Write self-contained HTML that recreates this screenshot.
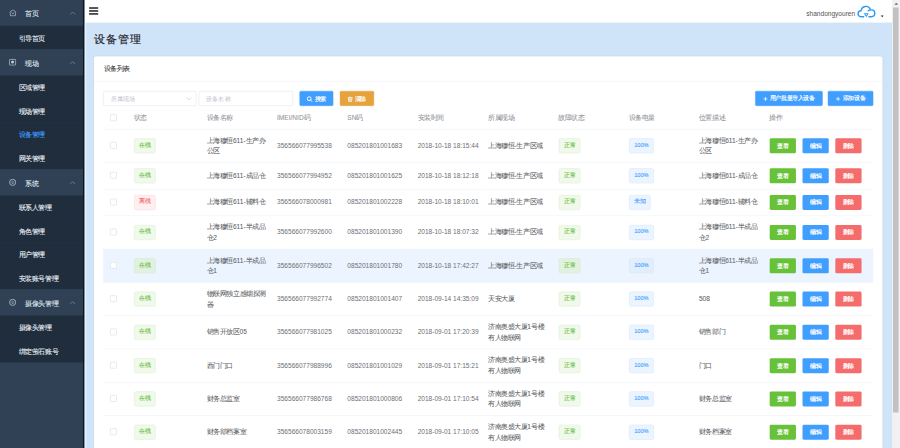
<!DOCTYPE html>
<html><head><meta charset="utf-8"><style>*{box-sizing:border-box;margin:0;padding:0}
html,body{width:900px;height:448px;overflow:hidden;background:#fff}
body{position:relative;font-family:"Liberation Sans",sans-serif}
#root{position:absolute;left:0;top:0;width:1920px;height:960px;transform:scale(0.46875);transform-origin:0 0;overflow:hidden;background:#cfe4f8}
.side{position:absolute;left:0;top:0;width:180px;height:960px;background:#304156}
.mi{position:absolute;left:0;width:180px;color:#dde3ea;font-size:14px}
.mh{height:56px;line-height:56px;background:#304156}
.ms{height:50px;line-height:50px;background:#1f2d3d;color:#e9eef3}
.mh span.t{position:absolute;left:54px;top:1.5px}
.ms span.t{position:absolute;left:40px;top:1.5px}
.ms.act{color:#409eff}
.mh svg.ic{position:absolute;left:20px;top:21px}
.mh svg.ar{position:absolute;left:148px;top:25px}
.nav{position:absolute;left:180px;top:0;width:1740px;height:50px;background:#fff;border-bottom:1.5px solid #e2e6ea}
.ham{position:absolute;left:10px;top:15px}
.user{position:absolute;left:1540px;top:23px;font-size:14px;color:#555;line-height:16px}
.cloud{position:absolute;left:1644px;top:8px}
.caret{position:absolute;left:1699px;top:34px;width:0;height:0;border-left:3px solid transparent;border-right:3px solid transparent;border-top:4px solid #222}
.main{position:absolute;left:180px;top:50px;width:1723px;height:910px;background:#cfe4f8}
.title{position:absolute;left:21.5px;top:17.5px;font-size:24.5px;line-height:34px;color:#1f2329;-webkit-text-stroke:0.35px #1f2329}
.card{position:absolute;left:20px;top:71px;width:1683px;height:900px;background:#fff;border:1px solid #eef2f6;border-radius:4px;box-shadow:0 0 0 1.6px #c4dcf1}
.card-h{position:absolute;left:0;top:0;width:100%;height:53px;border-bottom:1px solid #ebeef5;padding:18px 20px 0;font-size:14px;line-height:17px;color:#303133;-webkit-text-stroke:0.1px #303133}
.sel-box,.inp-box{position:absolute;top:73px;height:32px;border:1px solid #dcdfe6;border-radius:4px;background:#fff}
.sel-box{left:19px;width:199px}
.inp-box{left:223px;width:201px}
.ph{position:absolute;left:15px;top:7.5px;font-size:13.3px;line-height:16px;color:#c0c4cc}
.chev{position:absolute;left:175.5px;top:12px}
.fbtn{position:absolute;top:73px;height:32px;border-radius:3px;color:#fff;font-size:12px;line-height:12px}
.fbtn.b{background:#409eff;border:1px solid #409eff}
.fbtn.o{background:#e6a23c;border:1px solid #e6a23c}
.tbl{position:absolute;left:19px;top:106px;width:1643px;border-collapse:collapse;table-layout:fixed;font-size:14px;color:#606266}
.tbl td{border-bottom:1px solid #ebeef5;padding:0 10px;vertical-align:middle;line-height:23px;white-space:nowrap}
.tbl tr.th td{color:#909399;font-weight:normal}
.hovbg{position:absolute;left:19px;top:410px;width:1643px;height:71px;background:#ecf5ff}
.tbl td.sel{padding:0 0 0 15px}
.tbl td.ops{padding-left:11px}
.tbl td{-webkit-text-stroke:0.12px currentColor}
.fbtn span{-webkit-text-stroke:0.35px #fff}
.mi .t{-webkit-text-stroke:0.22px currentColor}
.tag{-webkit-text-stroke:0.22px currentColor;margin-left:1px}
.cb{display:inline-block;width:14px;height:14px;border:1.3px solid #cfd3da;border-radius:2px;background:#fff;vertical-align:middle;position:relative;top:-1px}
.tag{display:inline-block;height:32px;line-height:27px;padding:0 10px;font-size:12px;border-radius:4px;border:1px solid;vertical-align:middle}
.tag.ok{background:#f0f9eb;border-color:#d8efcb;color:#67c23a}
.tag.bad{background:#fef0f0;border-color:#fbd6d6;color:#f56c6c}
.tag.pri{background:#ecf5ff;border-color:#d0e6fd;color:#409eff}
.hov .tag.ok{background:#e2f0e0;border-color:#d2e9c8}
.hov .tag.pri{background:#e2eefb}
.btn{display:inline-block;-webkit-text-stroke:0.4px #fff;width:56px;height:32px;line-height:32px;text-align:center;font-size:12px;color:#fff;border-radius:3px;vertical-align:middle;margin-right:14px}
.btn.g{background:#67c23a}
.btn.b{background:#409eff}
.btn.r{background:#f56c6c}
.sb{position:absolute;left:1903px;top:0;width:17px;height:960px;background:#f1f1f1}
.sb-up{position:absolute;left:4.5px;top:6.5px;width:0;height:0;border-left:4px solid transparent;border-right:4px solid transparent;border-bottom:4.5px solid #666}
.sb-thumb{position:absolute;left:2px;top:17px;width:12px;height:864px;background:#c1c1c1}
#inner{position:absolute;left:0;top:-1px;width:1920px;height:962px}
.edge1{position:absolute;left:177px;top:0;width:2.5px;height:962px;background:#0d1723}
.edge2{position:absolute;left:180.5px;top:50px;width:3.5px;height:912px;background:#e3f3fd}
.tbl td.num{color:#6c6f75;-webkit-text-stroke:0}
</style></head>
<body><div id="root"><div id="inner">
<div class="side">
<div class="mi mh" style="top:0px"><svg class="ic" width="15" height="15" viewBox="0 0 15 15"><path d="M7.5 0.8 L14 5.8 L12.4 13.8 H2.6 L1 5.8 Z" fill="none" stroke="#bfcbd9" stroke-width="1.5" stroke-linejoin="miter"/><path d="M4.6 7.2 Q7.5 10.8 10.4 7.2" fill="none" stroke="#bfcbd9" stroke-width="1.5"/></svg><span class="t">首页</span><svg class="ar" width="14" height="8" viewBox="0 0 14 8"><path d="M1.5 7 L7 1.5 L12.5 7" fill="none" stroke="#8592a3" stroke-width="1.4"/></svg></div>
<div class="mi ms" style="top:56px"><span class="t">引导首页</span></div>
<div class="mi mh" style="top:106px"><svg class="ic" width="16" height="15" viewBox="0 0 16 15" style="left:19px;top:20px"><rect x="1" y="1.5" width="13.5" height="12.5" rx="2" fill="none" stroke="#bfcbd9" stroke-width="1.6"/><circle cx="7.75" cy="7.5" r="3.2" fill="#bfcbd9"/></svg><span class="t">现场</span><svg class="ar" width="14" height="8" viewBox="0 0 14 8"><path d="M1.5 7 L7 1.5 L12.5 7" fill="none" stroke="#8592a3" stroke-width="1.4"/></svg></div>
<div class="mi ms" style="top:162px"><span class="t">区域管理</span></div>
<div class="mi ms" style="top:212px"><span class="t">现场管理</span></div>
<div class="mi ms act" style="top:262px"><span class="t">设备管理</span></div>
<div class="mi ms" style="top:312px"><span class="t">网关管理</span></div>
<div class="mi mh" style="top:362px"><svg class="ic" width="16" height="16" viewBox="0 0 16 16" style="left:18.5px;top:20px"><circle cx="8" cy="8" r="6.6" fill="none" stroke="#bfcbd9" stroke-width="1.6"/><path d="M8 4.6 L11.4 8 L8 11.4 L4.6 8 Z" fill="none" stroke="#bfcbd9" stroke-width="1.1"/><circle cx="8" cy="8" r="0.9" fill="#bfcbd9"/></svg><span class="t">系统</span><svg class="ar" width="14" height="8" viewBox="0 0 14 8"><path d="M1.5 7 L7 1.5 L12.5 7" fill="none" stroke="#8592a3" stroke-width="1.4"/></svg></div>
<div class="mi ms" style="top:418px"><span class="t">联系人管理</span></div>
<div class="mi ms" style="top:468px"><span class="t">角色管理</span></div>
<div class="mi ms" style="top:518px"><span class="t">用户管理</span></div>
<div class="mi ms" style="top:568px"><span class="t">安装账号管理</span></div>
<div class="mi mh" style="top:618px"><svg class="ic" width="16" height="16" viewBox="0 0 16 16" style="left:18.5px;top:20px"><circle cx="8" cy="8" r="6.6" fill="none" stroke="#bfcbd9" stroke-width="1.6"/><path d="M8 4.6 L11.4 8 L8 11.4 L4.6 8 Z" fill="none" stroke="#bfcbd9" stroke-width="1.1"/><circle cx="8" cy="8" r="0.9" fill="#bfcbd9"/></svg><span class="t">摄像头管理</span><svg class="ar" width="14" height="8" viewBox="0 0 14 8"><path d="M1.5 7 L7 1.5 L12.5 7" fill="none" stroke="#8592a3" stroke-width="1.4"/></svg></div>
<div class="mi ms" style="top:674px"><span class="t">摄像头管理</span></div>
<div class="mi ms" style="top:724px"><span class="t">绑定萤石账号</span></div>
</div>
<div class="nav">
 <svg class="ham" viewBox="0 0 20 20" width="20" height="20"><rect x="0" y="1.5" width="20" height="3.2" fill="#222"/><rect x="0" y="7.8" width="20" height="3.2" fill="#222"/><rect x="0" y="14.1" width="20" height="3.2" fill="#222"/></svg>
 <span class="user">shandongyouren</span>
 <svg class="cloud" viewBox="0 0 24 16" width="51.2" height="34.13"><g fill="none" stroke="#2b9bef" stroke-width="1.4" stroke-linecap="round"><path d="M8.6 13.4 H6.0 A3 3 0 0 1 6.1 7.4 A4.9 4.9 0 0 1 15.3 5.8"/><path d="M13.2 7.4 Q14 6.6 16.4 6.6 A3.4 3.4 0 0 1 16.4 13.4 H13.9"/></g><path d="M8.7 9.9 H13.8 L11.25 13.9 Z" fill="#2b9bef"/><circle cx="11.25" cy="11.3" r="0.6" fill="#fff"/></svg>
 <span class="caret"></span>
</div>
<div class="main">
 <div class="title">设备管理</div>
 <div class="card">
  <div class="card-h">设备列表</div>
  <div class="sel-box"><span class="ph">所属现场</span><svg class="chev" viewBox="0 0 12 7" width="12" height="7"><path d="M1 1 L6 6 L11 1" fill="none" stroke="#c0c4cc" stroke-width="1.4"/></svg></div>
  <div class="inp-box"><span class="ph">设备名称</span></div>
  <div class="fbtn b" style="left:438px;width:72px"><svg viewBox="0 0 14 14" width="13" height="13" style="position:absolute;left:14px;top:10px"><circle cx="6" cy="6" r="4.4" fill="none" stroke="#fff" stroke-width="2.2"/><path d="M9.3 9.3 L12.6 12.6" stroke="#fff" stroke-width="2.2" stroke-linecap="round"/></svg><span style="position:absolute;left:31px;top:10px;font-size:12px">搜索</span></div>
  <div class="fbtn o" style="left:524px;width:73px"><svg viewBox="0 0 14 14" width="12" height="12" style="position:absolute;left:15px;top:11px"><path d="M1 3 H13 M5 3 V1.2 H9 V3 M2.7 3 L3.5 13 H10.5 L11.3 3 M5.8 5.5 V10.5 M8.2 5.5 V10.5" fill="none" stroke="#fff" stroke-width="1.9"/></svg><span style="position:absolute;left:31px;top:10px;font-size:12px">清除</span></div>
  <div class="fbtn b" style="left:1410px;width:144px"><svg viewBox="0 0 10 10" width="10" height="10" style="position:absolute;left:16px;top:11px"><path d="M5 0.5 V9.5 M0.5 5 H9.5" stroke="#fff" stroke-width="1.6"/></svg><span style="position:absolute;left:30px;top:9px">用户批量导入设备</span></div>
  <div class="fbtn b" style="left:1565px;width:97px"><svg viewBox="0 0 10 10" width="10" height="10" style="position:absolute;left:16px;top:11px"><path d="M5 0.5 V9.5 M0.5 5 H9.5" stroke="#fff" stroke-width="1.6"/></svg><span style="position:absolute;left:31px;top:9px">添加设备</span></div>
  <div class="hovbg"></div><table class="tbl"><colgroup><col style="width:55px"><col style="width:156px"><col style="width:150px"><col style="width:150px"><col style="width:150px"><col style="width:150px"><col style="width:150px"><col style="width:150px"><col style="width:150px"><col style="width:150px"><col style="width:232px"></colgroup>
   <tr class="th" style="height:48px"><td class="sel"><span class="cb"></span></td><td>状态</td><td>设备名称</td><td>IMEI/NID码</td><td>SN码</td><td>安装时间</td><td>所属现场</td><td>故障状态</td><td>设备电量</td><td>位置描述</td><td>操作</td></tr>
   <tr class="" style="height:71px"><td class="sel"><span class="cb"></span></td><td><span class="tag ok">在线</span></td><td>上海穆恒611-生产办<br>公区</td><td class="num">356566077995538</td><td class="num">085201801001683</td><td class="num">2018-10-18 18:15:44</td><td>上海穆恒-生产区域</td><td><span class="tag ok">正常</span></td><td><span class="tag pri">100%</span></td><td>上海穆恒611-生产办<br>公区</td><td class="ops"><span class="btn g">查看</span><span class="btn b">编辑</span><span class="btn r">删除</span></td></tr><tr class="" style="height:57px"><td class="sel"><span class="cb"></span></td><td><span class="tag ok">在线</span></td><td>上海穆恒611-成品仓</td><td class="num">356566077994952</td><td class="num">085201801001625</td><td class="num">2018-10-18 18:12:18</td><td>上海穆恒-生产区域</td><td><span class="tag ok">正常</span></td><td><span class="tag pri">100%</span></td><td>上海穆恒611-成品仓</td><td class="ops"><span class="btn g">查看</span><span class="btn b">编辑</span><span class="btn r">删除</span></td></tr><tr class="" style="height:57px"><td class="sel"><span class="cb"></span></td><td><span class="tag bad">离线</span></td><td>上海穆恒611-辅料仓</td><td class="num">356566078000981</td><td class="num">085201801002228</td><td class="num">2018-10-18 18:10:01</td><td>上海穆恒-生产区域</td><td><span class="tag ok">正常</span></td><td><span class="tag pri">未知</span></td><td>上海穆恒611-辅料仓</td><td class="ops"><span class="btn g">查看</span><span class="btn b">编辑</span><span class="btn r">删除</span></td></tr><tr class="" style="height:71px"><td class="sel"><span class="cb"></span></td><td><span class="tag ok">在线</span></td><td>上海穆恒611-半成品<br>仓2</td><td class="num">356566077992600</td><td class="num">085201801001390</td><td class="num">2018-10-18 18:07:32</td><td>上海穆恒-生产区域</td><td><span class="tag ok">正常</span></td><td><span class="tag pri">100%</span></td><td>上海穆恒611-半成品<br>仓2</td><td class="ops"><span class="btn g">查看</span><span class="btn b">编辑</span><span class="btn r">删除</span></td></tr><tr class="hov" style="height:71px"><td class="sel"><span class="cb"></span></td><td><span class="tag ok">在线</span></td><td>上海穆恒611-半成品<br>仓1</td><td class="num">356566077996502</td><td class="num">085201801001780</td><td class="num">2018-10-18 17:42:27</td><td>上海穆恒-生产区域</td><td><span class="tag ok">正常</span></td><td><span class="tag pri">100%</span></td><td>上海穆恒611-半成品<br>仓1</td><td class="ops"><span class="btn g">查看</span><span class="btn b">编辑</span><span class="btn r">删除</span></td></tr><tr class="" style="height:71px"><td class="sel"><span class="cb"></span></td><td><span class="tag ok">在线</span></td><td>物联网独立感烟探测<br>器</td><td class="num">356566077992774</td><td class="num">085201801001407</td><td class="num">2018-09-14 14:35:09</td><td>天安大厦</td><td><span class="tag ok">正常</span></td><td><span class="tag pri">100%</span></td><td>508</td><td class="ops"><span class="btn g">查看</span><span class="btn b">编辑</span><span class="btn r">删除</span></td></tr><tr class="" style="height:71px"><td class="sel"><span class="cb"></span></td><td><span class="tag ok">在线</span></td><td>销售开放区05</td><td class="num">356566077981025</td><td class="num">085201801000232</td><td class="num">2018-09-01 17:20:39</td><td>济南奥盛大厦1号楼<br>有人物联网</td><td><span class="tag ok">正常</span></td><td><span class="tag pri">100%</span></td><td>销售部门</td><td class="ops"><span class="btn g">查看</span><span class="btn b">编辑</span><span class="btn r">删除</span></td></tr><tr class="" style="height:71px"><td class="sel"><span class="cb"></span></td><td><span class="tag ok">在线</span></td><td>西门门口</td><td class="num">356566077988996</td><td class="num">085201801001029</td><td class="num">2018-09-01 17:15:21</td><td>济南奥盛大厦1号楼<br>有人物联网</td><td><span class="tag ok">正常</span></td><td><span class="tag pri">100%</span></td><td>门口</td><td class="ops"><span class="btn g">查看</span><span class="btn b">编辑</span><span class="btn r">删除</span></td></tr><tr class="" style="height:71px"><td class="sel"><span class="cb"></span></td><td><span class="tag ok">在线</span></td><td>财务总监室</td><td class="num">356566077986768</td><td class="num">085201801000806</td><td class="num">2018-09-01 17:10:54</td><td>济南奥盛大厦1号楼<br>有人物联网</td><td><span class="tag ok">正常</span></td><td><span class="tag pri">100%</span></td><td>财务总监室</td><td class="ops"><span class="btn g">查看</span><span class="btn b">编辑</span><span class="btn r">删除</span></td></tr><tr class="" style="height:71px"><td class="sel"><span class="cb"></span></td><td><span class="tag ok">在线</span></td><td>财务部档案室</td><td class="num">356566078003159</td><td class="num">085201801002445</td><td class="num">2018-09-01 17:10:05</td><td>济南奥盛大厦1号楼<br>有人物联网</td><td><span class="tag ok">正常</span></td><td><span class="tag pri">100%</span></td><td>财务档案室</td><td class="ops"><span class="btn g">查看</span><span class="btn b">编辑</span><span class="btn r">删除</span></td></tr>
  </table>
 </div>
</div>
<div class="edge1"></div><div class="edge2"></div><div class="sb"><div class="sb-up"></div><div class="sb-thumb"></div></div>
</div></div></body></html>
